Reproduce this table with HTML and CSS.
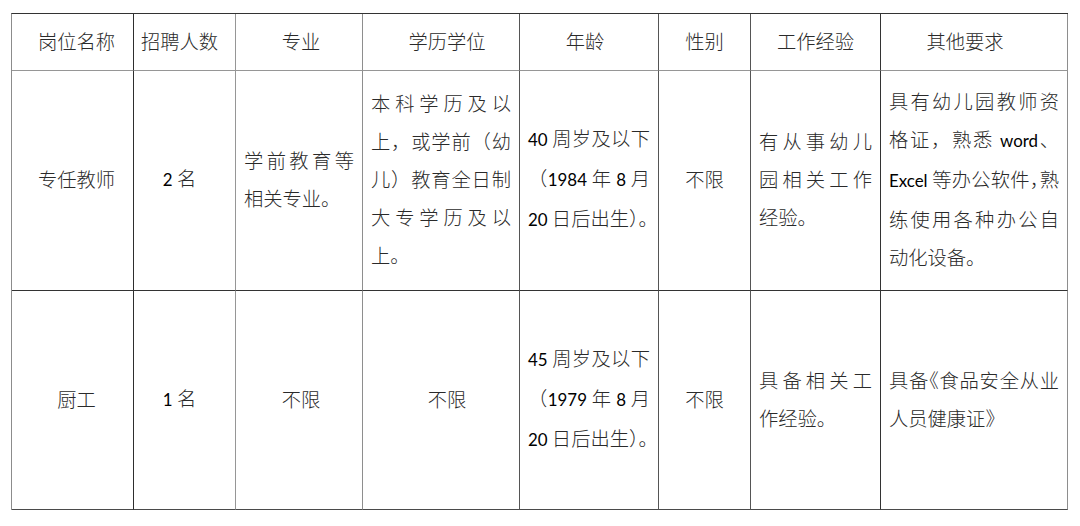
FILE: index.html
```html
<!DOCTYPE html>
<html lang="zh-CN">
<head>
<meta charset="utf-8">
<title>招聘岗位</title>
<link rel="stylesheet" href="styles.css">
</head>
<body>
<table class="grid">
  <colgroup>
    <col class="w1"><col class="w2"><col class="w3"><col class="w4">
    <col class="w5"><col class="w6"><col class="w7"><col class="w8">
  </colgroup>
  <thead>
    <tr class="head">
      <th>岗位名称</th>
      <th>招聘人数</th>
      <th>专业</th>
      <th>学历学位</th>
      <th>年龄</th>
      <th>性别</th>
      <th>工作经验</th>
      <th>其他要求</th>
    </tr>
  </thead>
  <tbody>
    <tr class="row1">
      <td class="c">专任教师</td>
      <td class="c"><span class="en">2</span> 名</td>
      <td>
        <span class="ln j">学前教育等</span>
        <span class="ln">相关专业。</span>
      </td>
      <td>
        <span class="ln j">本科学历及以</span>
        <span class="ln j">上，或学前（幼</span>
        <span class="ln j">儿）教育全日制</span>
        <span class="ln j">大专学历及以</span>
        <span class="ln">上。</span>
      </td>
      <td>
        <span class="ln j"><span class="en">40</span> 周岁及以下</span>
        <span class="ln j">（<span class="en">1984</span> 年 <span class="en">8</span> 月</span>
        <span class="ln"><span class="en">20</span> 日后出生）。</span>
      </td>
      <td class="c">不限</td>
      <td>
        <span class="ln j">有从事幼儿</span>
        <span class="ln j">园相关工作</span>
        <span class="ln">经验。</span>
      </td>
      <td>
        <span class="ln j">具有幼儿园教师资</span>
        <span class="ln j">格证，熟悉 <span class="en">word</span>、</span>
        <span class="ln j"><span class="en">Excel</span> 等办公软件<span class="half">，</span>熟</span>
        <span class="ln j">练使用各种办公自</span>
        <span class="ln">动化设备。</span>
      </td>
    </tr>
    <tr class="row2">
      <td class="c">厨工</td>
      <td class="c"><span class="en">1</span> 名</td>
      <td class="c">不限</td>
      <td class="c">不限</td>
      <td>
        <span class="ln j"><span class="en">45</span> 周岁及以下</span>
        <span class="ln j">（<span class="en">1979</span> 年 <span class="en">8</span> 月</span>
        <span class="ln"><span class="en">20</span> 日后出生）。</span>
      </td>
      <td class="c">不限</td>
      <td>
        <span class="ln j">具备相关工</span>
        <span class="ln">作经验。</span>
      </td>
      <td>
        <span class="ln j">具备<span class="half">《</span>食品安全从业</span>
        <span class="ln">人员健康证》</span>
      </td>
    </tr>
  </tbody>
</table>
</body>
</html>
```

FILE: styles.css
```css
html, body {
  margin: 0;
  background: #ffffff;
}

body {
  padding: 13px 0 0 11px;
  font-family: "Noto Sans CJK SC", "Noto Sans", sans-serif;
  font-size: 19.3px;
  color: #2a2a2a;
}

.grid {
  border-collapse: separate;
  border-spacing: 0;
  table-layout: fixed;
  width: 1057px;
  border-top: 1px solid #333333;
  border-left: 1px solid #8c8c8c;
}

.w1 { width: 122px; }
.w2 { width: 102px; }
.w3 { width: 127px; }
.w4 { width: 157px; }
.w5 { width: 139px; }
.w6 { width: 92px; }
.w7 { width: 130px; }
.w8 { width: 187px; }

th, td {
  padding: 0 8px 3px;
  border-right: 1px solid #555555;
  border-bottom: 1px solid #555555;
  vertical-align: middle;
  text-align: left;
  font-weight: 300;
  line-height: 38px;
  overflow: visible;
}

th {
  text-align: center;
  padding-bottom: 2px;
}

td.c { text-align: center; }

/* vertical rule colours */
tr > :nth-child(1) { border-right-color: #2e2e2e; }
tr > :nth-child(2) { border-right-color: #969696; }
tr > :nth-child(3) { border-right-color: #8e8e8e; }
tr > :nth-child(4) { border-right-color: #555555; }
tr > :nth-child(5) { border-right-color: #555555; }
tr > :nth-child(6) { border-right-color: #555555; }
tr > :nth-child(7) { border-right-color: #333333; }
tr > :nth-child(8) { border-right-color: #8e8e8e; }

/* horizontal rule colours */
.head > * { border-bottom-color: #969696; }
.row1 > * { border-bottom-color: #333333; }
.row2 > * { border-bottom-color: #4a4a4a; }

.head { height: 57px; }
.row1 { height: 220px; }
.row2 { height: 219px; }

/* small centring offsets of the centred cells */
th:nth-child(1), td.c:nth-child(1) { padding-left: 12px; padding-right: 4px; }
th:nth-child(2), td.c:nth-child(2) { padding-left: 3px; padding-right: 13px; }
th:nth-child(3), td.c:nth-child(3) { padding-left: 10px; padding-right: 6px; }
th:nth-child(4), td.c:nth-child(4) { padding-left: 14px; padding-right: 2px; }
th:nth-child(5) { padding-left: 4px; padding-right: 12px; }
th:nth-child(8) { padding-left: 0; padding-right: 18px; }

.ln {
  display: block;
  white-space: nowrap;
}

.j {
  text-align: justify;
  text-align-last: justify;
}

.en {
  font-family: Lato, "Liberation Sans", sans-serif;
  font-size: 16.9px;
  font-weight: 400;
  color: #000000;
}

.half {
  font-feature-settings: "halt";
}
```
